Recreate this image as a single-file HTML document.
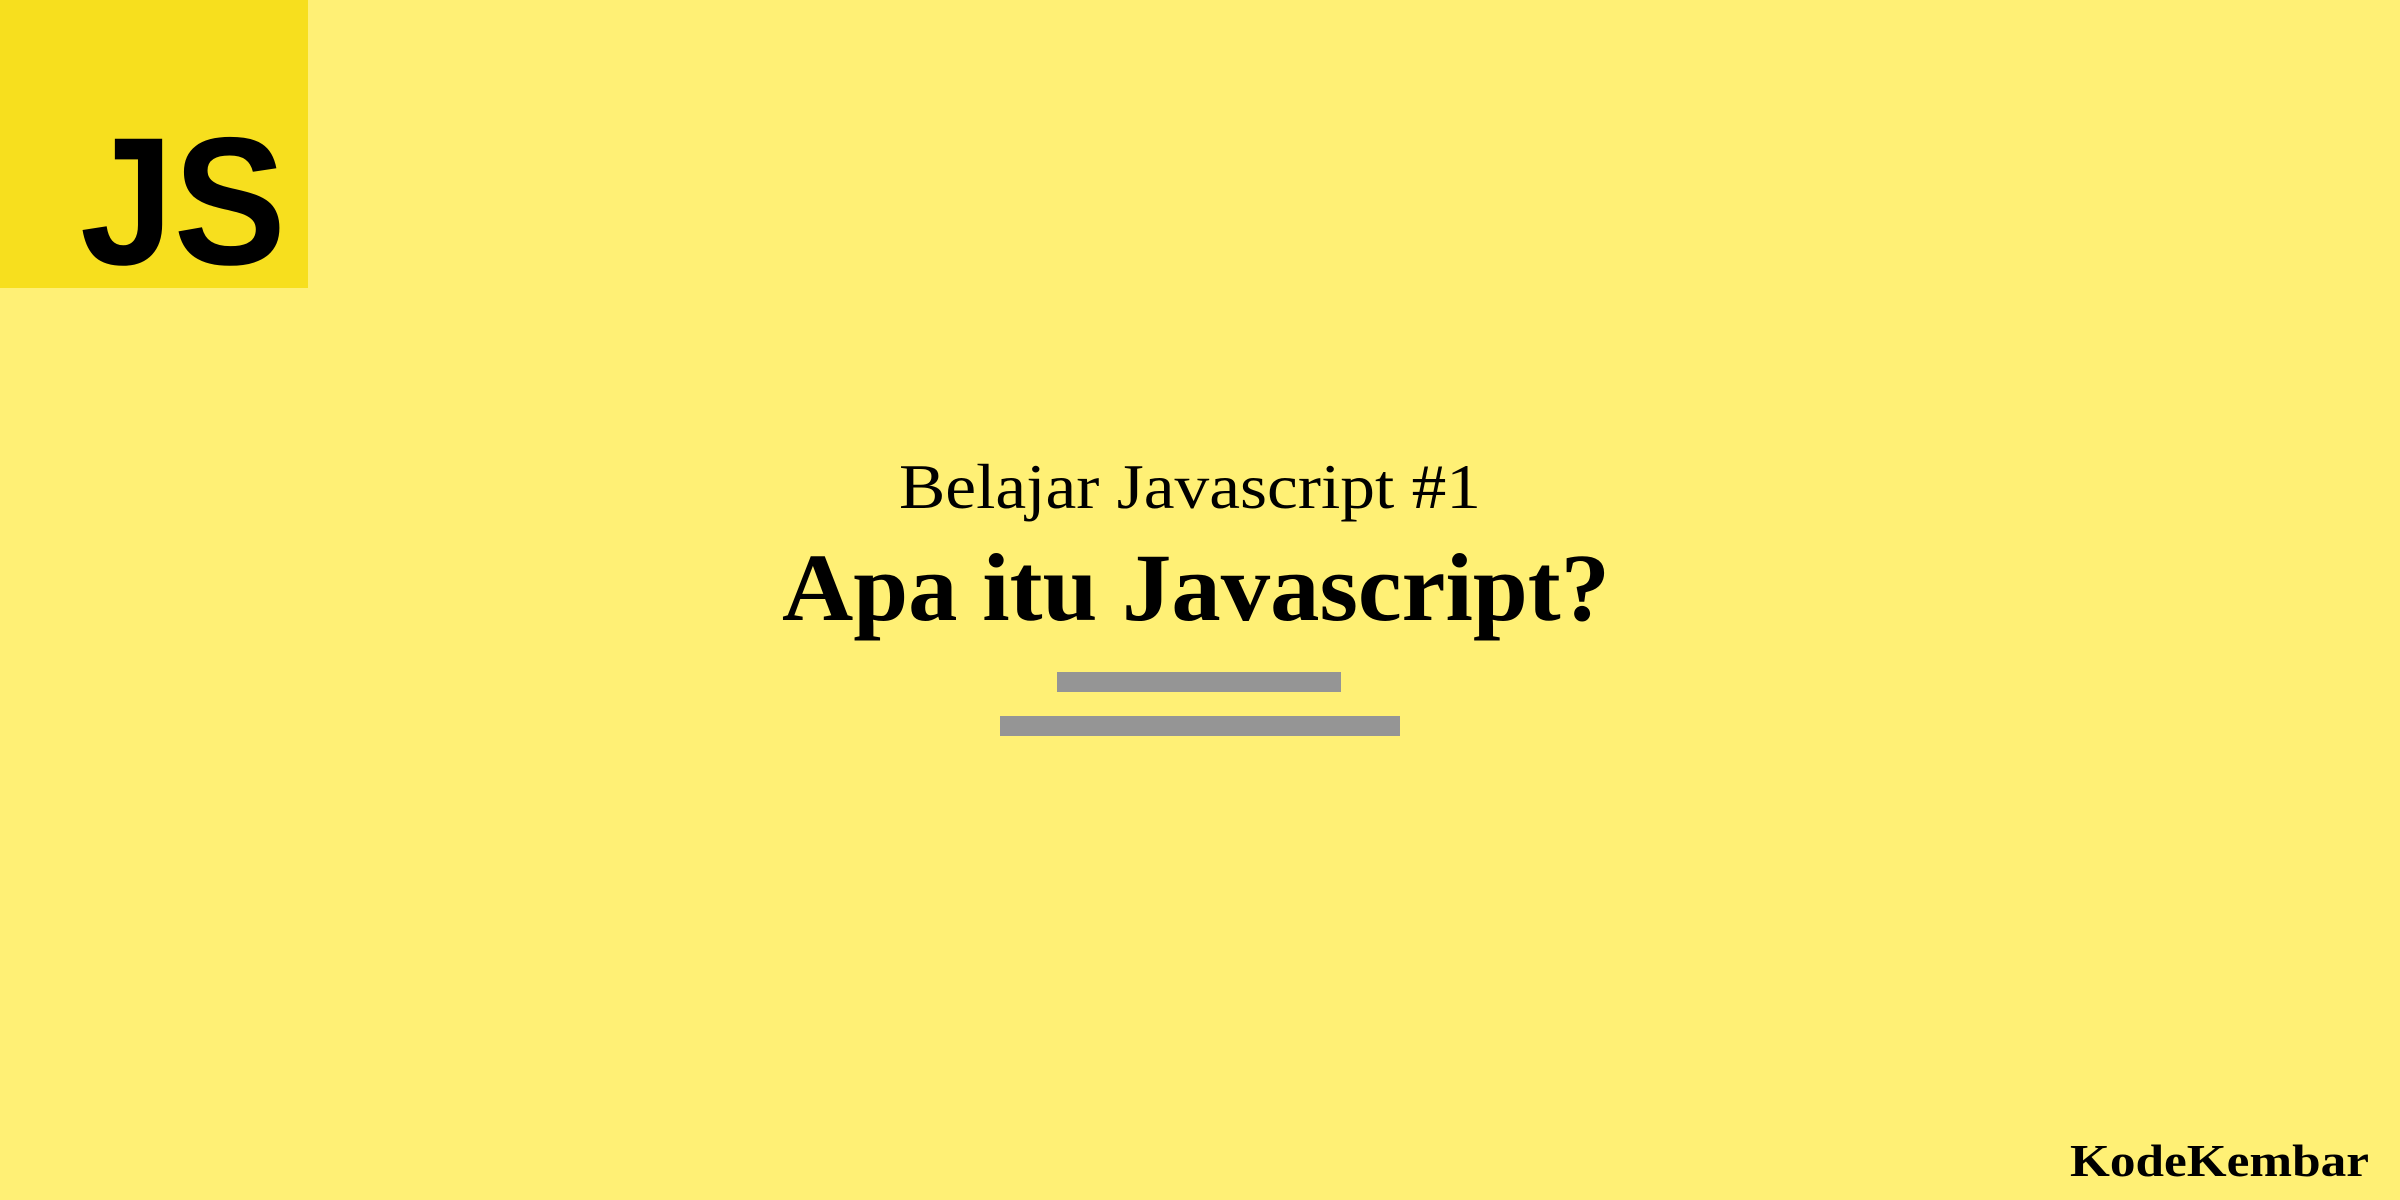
<!DOCTYPE html>
<html><head><meta charset="utf-8"><style>
html,body{margin:0;padding:0}
body{width:2400px;height:1200px;background:#fff075;overflow:hidden;position:relative}
</style></head><body>
<svg width="2400" height="1200" style="position:absolute;left:0;top:0">
<rect x="0" y="0" width="308" height="288" fill="#f7df1e"/>
<text x="80" y="264" font-family="Liberation Sans, sans-serif" font-weight="bold" font-size="182" textLength="206" lengthAdjust="spacingAndGlyphs" fill="#000">JS</text>
<text x="899" y="508" font-family="Liberation Serif, serif" font-size="64" textLength="582" lengthAdjust="spacingAndGlyphs" fill="#000">Belajar Javascript #1</text>
<text x="782" y="620" font-family="Liberation Serif, serif" font-weight="bold" font-size="96" textLength="828" lengthAdjust="spacingAndGlyphs" fill="#000">Apa itu Javascript?</text>
<rect x="1057" y="672" width="284" height="20" fill="#959595"/>
<rect x="1000" y="716" width="400" height="20" fill="#959595"/>
<text x="2070" y="1176" font-family="Liberation Serif, serif" font-weight="bold" font-size="46" textLength="299" lengthAdjust="spacingAndGlyphs" fill="#000">KodeKembar</text>
</svg>
</body></html>
